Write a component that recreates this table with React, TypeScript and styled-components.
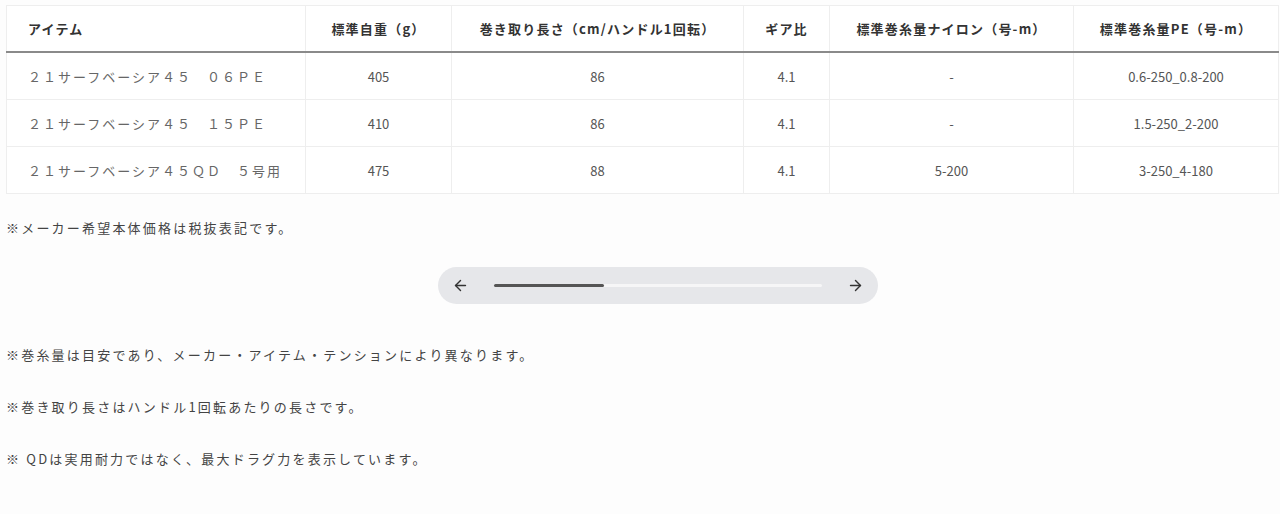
import React from 'react';
import styled, {createGlobalStyle} from "styled-components";
import {ArrowLeft, ArrowRight} from "lucide-react";

const GlobalStyle = createGlobalStyle`
  body {
    margin: 0;
    background: #fdfdfd;
    font-family: "Noto Sans CJK JP", "Noto Sans", sans-serif;
    color: #444;
  }
`

const headers = [
    "アイテム",
    "標準自重（g）",
    "巻き取り長さ（cm/ハンドル1回転）",
    "ギア比",
    "標準巻糸量ナイロン（号-m）",
    "標準巻糸量PE（号-m）",
]

const widths = [299, 146, 292, 86, 244, 205]

const rows = [
    ["２１サーフベーシア４５　０６ＰＥ", "405", "86", "4.1", "-", "0.6-250_0.8-200"],
    ["２１サーフベーシア４５　１５ＰＥ", "410", "86", "4.1", "-", "1.5-250_2-200"],
    ["２１サーフベーシア４５ＱＤ　５号用", "475", "88", "4.1", "5-200", "3-250_4-180"],
]

const notes = [
    "※巻糸量は目安であり、メーカー・アイテム・テンションにより異なります。",
    "※巻き取り長さはハンドル1回転あたりの長さです。",
    "※ QDは実用耐力ではなく、最大ドラグ力を表示しています。",
]

export default function App() {
    return (
        <>
            <GlobalStyle/>
            <Page>
                <SpecTable>
                    <colgroup>
                        {widths.map((w, i) => <col key={i} style={{width: w}}/>)}
                    </colgroup>
                    <thead>
                    <tr>
                        {headers.map((h, i) => <Th key={h} $first={i === 0}>{h}</Th>)}
                    </tr>
                    </thead>
                    <tbody>
                    {rows.map((r) => (
                        <tr key={r[0]}>
                            {r.map((c, i) => <Td key={i} $first={i === 0}>{c}</Td>)}
                        </tr>
                    ))}
                    </tbody>
                </SpecTable>

                <PriceNote>※メーカー希望本体価格は税抜表記です。</PriceNote>

                <Scroller>
                    <ArrowLeft size={17} strokeWidth={2}/>
                    <Track>
                        <Thumb/>
                    </Track>
                    <ArrowRight size={17} strokeWidth={2}/>
                </Scroller>

                <Notes>
                    {notes.map((n) => <Note key={n}>{n}</Note>)}
                </Notes>
            </Page>
        </>
    );
}

const Page = styled.div`
  padding: 5px 2px 0 6px;
`

const SpecTable = styled.table`
  width: 1272px;
  table-layout: fixed;
  border-collapse: collapse;
  background: #fff;
`

const Th = styled.th<{ $first?: boolean }>`
  height: 45px;
  padding: 0 0 0 ${({$first}) => $first ? "21px" : "0"};
  text-align: ${({$first}) => $first ? "left" : "center"};
  font-size: 13px;
  font-weight: 700;
  letter-spacing: 1.2px;
  color: #333;
  border: 1px solid #eee;
  border-bottom: 2px solid #8a8a8a;
  white-space: nowrap;
`

const Td = styled.td<{ $first?: boolean }>`
  height: 46px;
  padding: 0 0 0 ${({$first}) => $first ? "21px" : "0"};
  text-align: ${({$first}) => $first ? "left" : "center"};
  font-size: 13px;
  letter-spacing: ${({$first}) => $first ? "2px" : "0"};
  color: ${({$first}) => $first ? "#666" : "#555"};
  border: 1px solid #eee;
  white-space: nowrap;
`

const Note = styled.p`
  margin: 0;
  font-size: 13px;
  line-height: 20px;
  letter-spacing: 2.2px;
  color: #444;
`

const PriceNote = styled(Note)`
  margin-top: 24px;
`

const Scroller = styled.div`
  display: flex;
  align-items: center;
  gap: 25px;
  width: 440px;
  height: 37px;
  margin: 29px 0 0 432px;
  padding: 0 14px;
  box-sizing: border-box;
  border-radius: 19px;
  background: #e6e7ea;
  color: #333;
  
  svg {
    flex-shrink: 0;
  }
`

const Track = styled.div`
  flex: 1;
  height: 3px;
  background: #f6f6f7;
  border-radius: 2px;
  display: flex;
`

const Thumb = styled.div`
  width: 110px;
  height: 100%;
  background: #555;
  border-radius: 2px;
`

const Notes = styled.div`
  display: flex;
  flex-direction: column;
  gap: 32px;
  margin-top: 41px;
`
